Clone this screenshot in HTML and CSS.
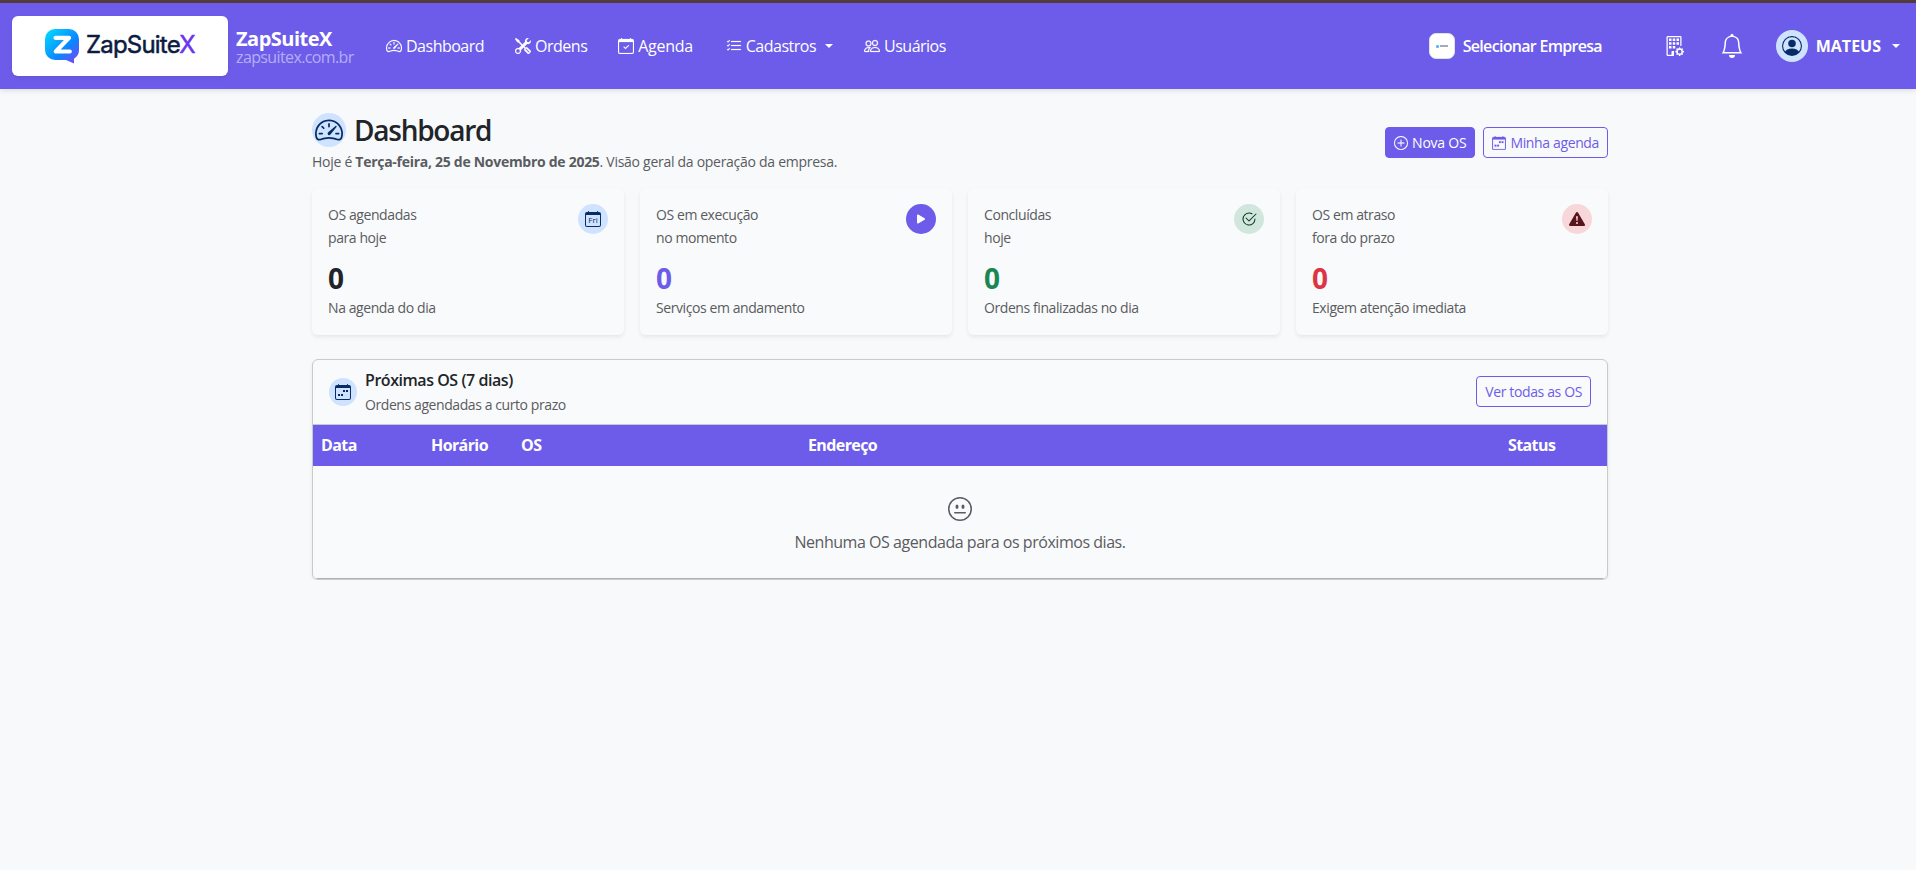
FILE: index.html
```html
<!DOCTYPE html>
<html lang="pt-br">
<head>
    <meta charset="utf-8">
    <title>Dashboard - ZapSuiteX</title>
    <link rel="stylesheet" href="styles.css">
</head>
<body>
    <nav class="navbar">
        <a class="brand">
            <span class="brand-logo">
                <svg width="34" height="35" viewBox="0 0 34 35">
                    <defs>
                        <linearGradient id="logoGrad" x1="0" y1="0" x2="1" y2="1">
                            <stop offset="0" stop-color="#00e0ff"/>
                            <stop offset="0.6" stop-color="#0b84ff"/>
                            <stop offset="1" stop-color="#8a3cf5"/>
                        </linearGradient>
                    </defs>
                    <path fill="url(#logoGrad)" d="M10 0h14a10 10 0 0 1 10 10v11a10 10 0 0 1-5 8.700V34.500L21 31H10A10 10 0 0 1 0 21V10A10 10 0 0 1 10 0z"/>
                    <path d="M10.500 8.800h13.500L10.800 22.500h14" fill="none" stroke="#fff" stroke-width="4.200" stroke-linejoin="round" stroke-linecap="round"/>
                </svg>
                <span class="logo-text">ZapSuite<b>X</b></span>
            </span>
            <span class="brand-info">
                <strong>ZapSuiteX</strong>
                <small>zapsuitex.com.br</small>
            </span>
        </a>
        <ul class="nav-links">
            <li>
                <svg class="icon" viewBox="0 0 16 16"><path d="M8 4a.5.5 0 0 1 .5.5V6a.5.5 0 0 1-1 0V4.500A.5.5 0 0 1 8 4M3.732 5.732a.5.5 0 0 1 .707 0l.915.914a.5.5 0 1 1-.708.708l-.914-.915a.5.5 0 0 1 0-.707M2 10a.5.5 0 0 1 .5-.5h1.586a.5.5 0 0 1 0 1H2.500A.5.5 0 0 1 2 10m9.500 0a.5.5 0 0 1 .5-.5h1.500a.5.5 0 0 1 0 1H12a.5.5 0 0 1-.5-.5m.754-4.246a.39.39 0 0 0-.527-.02L7.547 9.310a.91.91 0 1 0 1.302 1.258l3.434-4.297a.39.39 0 0 0-.029-.518z"/><path fill-rule="evenodd" d="M0 10a8 8 0 1 1 15.547 2.661c-.442 1.253-1.845 1.602-2.932 1.250C11.309 13.488 9.475 13 8 13c-1.474 0-3.310.488-4.615.911-1.087.352-2.490.003-2.932-1.250A8 8 0 0 1 0 10m8-7a7 7 0 0 0-6.603 9.329c.203.575.923.876 1.680.63C4.397 12.533 6.358 12 8 12s3.604.532 4.923.96c.757.245 1.477-.056 1.680-.631A7 7 0 0 0 8 3"/></svg>
                Dashboard
            </li>
            <li>
                <svg class="icon" viewBox="0 0 16 16"><path fill-rule="evenodd" d="M1 0 0 1l2.200 3.081a1 1 0 0 0 .815.419h.07a1 1 0 0 1 .708.293l2.675 2.675-2.617 2.654A3.003 3.003 0 0 0 0 13a3 3 0 1 0 5.878-.851l2.654-2.617.968.968-.305.914a1 1 0 0 0 .242 1.023l3.270 3.270a.997.997 0 0 0 1.414 0l1.586-1.586a.997.997 0 0 0 0-1.414l-3.270-3.270a1 1 0 0 0-1.023-.242L10.500 9.500l-.96-.96 2.680-2.643A3.005 3.005 0 0 0 16 3q0-.405-.102-.777l-2.140 2.141L12 4l-.364-1.757L13.777.102a3 3 0 0 0-3.675 3.680L7.462 6.460 4.793 3.793a1 1 0 0 1-.293-.707v-.071a1 1 0 0 0-.419-.814zm9.646 10.646a.5.5 0 0 1 .708 0l2.914 2.915a.5.5 0 0 1-.707.707l-2.915-2.914a.5.5 0 0 1 0-.708M3 11l.471.242.529.026.287.445.445.287.026.529L5 13l-.242.471-.026.529-.445.287-.287.445-.529.026L3 15l-.471-.242L2 14.732l-.287-.445L1.268 14l-.026-.529L1 13l.242-.471.026-.529.445-.287.287-.445.529-.026z"/></svg>
                Ordens
            </li>
            <li class="nav-agenda">
                <svg class="icon" viewBox="0 0 16 16"><path d="M10.854 7.146a.5.5 0 0 1 0 .708l-3 3a.5.5 0 0 1-.708 0l-1.500-1.500a.5.5 0 1 1 .708-.708L7.500 9.793l2.646-2.647a.5.5 0 0 1 .708 0"/><path d="M3.500 0a.5.5 0 0 1 .5.5V1h8V.5a.5.5 0 0 1 1 0V1h1a2 2 0 0 1 2 2v11a2 2 0 0 1-2 2H2a2 2 0 0 1-2-2V3a2 2 0 0 1 2-2h1V.5a.5.5 0 0 1 .5-.5M1 4v10a1 1 0 0 0 1 1h12a1 1 0 0 0 1-1V4z"/></svg>
                Agenda
            </li>
            <li>
                <svg class="icon" viewBox="0 0 16 16"><path fill-rule="evenodd" d="M5 11.500a.5.5 0 0 1 .5-.5h9a.5.5 0 0 1 0 1h-9a.5.5 0 0 1-.5-.5m0-4a.5.5 0 0 1 .5-.5h9a.5.5 0 0 1 0 1h-9a.5.5 0 0 1-.5-.5m0-4a.5.5 0 0 1 .5-.5h9a.5.5 0 0 1 0 1h-9a.5.5 0 0 1-.5-.5M3.854 2.146a.5.5 0 0 1 0 .708l-1.500 1.500a.5.5 0 0 1-.708 0l-.5-.5a.5.5 0 1 1 .708-.708L2 3.293l1.146-1.147a.5.5 0 0 1 .708 0m0 4a.5.5 0 0 1 0 .708l-1.500 1.500a.5.5 0 0 1-.708 0l-.5-.5a.5.5 0 1 1 .708-.708L2 7.293l1.146-1.147a.5.5 0 0 1 .708 0m0 4a.5.5 0 0 1 0 .708l-1.500 1.500a.5.5 0 0 1-.708 0l-.5-.5a.5.5 0 0 1 .708-.708l.146.147 1.146-1.147a.5.5 0 0 1 .708 0"/></svg>
                Cadastros
                <span class="caret"></span>
            </li>
            <li>
                <svg class="icon" viewBox="0 0 16 16"><path d="M15 14s1 0 1-1-1-4-5-4-5 3-5 4 1 1 1 1zm-7.978-1L7 12.996c.001-.264.167-1.030.76-1.720C8.312 10.629 9.282 10 11 10c1.717 0 2.687.63 3.240 1.276.593.69.758 1.457.76 1.720l-.008.002-.014.002zM11 7a2 2 0 1 0 0-4 2 2 0 0 0 0 4m3-2a3 3 0 1 1-6 0 3 3 0 0 1 6 0M6.936 9.280a6 6 0 0 0-1.230-.247A7 7 0 0 0 5 9c-4 0-5 3-5 4q0 1 1 1h4.216A2.240 2.240 0 0 1 5 13c0-1.010.377-2.042 1.090-2.904.243-.294.526-.569.846-.816M4.920 10A5.500 5.500 0 0 0 4 13H1c0-.26.164-1.030.76-1.724.545-.636 1.492-1.256 3.160-1.275ZM1.500 5.500a3 3 0 1 1 6 0 3 3 0 0 1-6 0m3-2a2 2 0 1 0 0 4 2 2 0 0 0 0-4"/></svg>
                Usuários
            </li>
        </ul>
        <div class="nav-right">
            <a class="company">
                <span class="company-img"><i></i><u></u></span>
                Selecionar Empresa
            </a>
            <svg class="nav-icon building" viewBox="0 0 16 16"><path d="M2 1a1 1 0 0 1 1-1h10a1 1 0 0 1 1 1v6.500a.5.5 0 0 1-1 0V1H3v14h3v-2.500a.5.5 0 0 1 .5-.5H8v4H3a1 1 0 0 1-1-1z"/><path d="M4 2h2v2H4zM7 2h2v2H7zM10 2h2v2h-2zM4 5h2v2H4zM7 5h2v2H7zM10 5h2v2h-2zM4 8h2v2H4zM7 8h2v2H7z"/><path fill-rule="evenodd" d="M11.886 9.460c.18-.613 1.048-.613 1.229 0l.043.148a.64.64 0 0 0 .921.382l.136-.074c.561-.306 1.175.308.87.869l-.075.136a.64.64 0 0 0 .382.92l.149.045c.612.18.612 1.048 0 1.229l-.15.043a.64.64 0 0 0-.38.921l.074.136c.305.561-.309 1.175-.87.87l-.136-.075a.64.64 0 0 0-.92.382l-.045.149c-.18.612-1.048.612-1.229 0l-.043-.15a.64.64 0 0 0-.921-.38l-.136.074c-.561.305-1.175-.309-.87-.87l.075-.136a.64.64 0 0 0-.382-.92l-.148-.045c-.613-.18-.613-1.048 0-1.229l.148-.043a.64.64 0 0 0 .382-.921l-.074-.136c-.306-.561.308-1.175.869-.87l.136.075a.64.64 0 0 0 .92-.382zM14 12.500a1.500 1.500 0 1 0-3 0 1.500 1.500 0 0 0 3 0"/></svg>
            <svg class="nav-icon bell" viewBox="0 0 16 16"><path d="M8 16a2 2 0 0 0 2-2H6a2 2 0 0 0 2 2M8 1.918l-.797.161A4 4 0 0 0 4 6c0 .628-.134 2.197-.459 3.742-.16.767-.376 1.566-.663 2.258h10.244c-.287-.692-.502-1.490-.663-2.258C12.134 8.197 12 6.628 12 6a4 4 0 0 0-3.203-3.920zM14.220 12c.223.447.481.801.78 1H1c.299-.199.557-.553.78-1C2.680 10.200 3 6.880 3 6c0-2.420 1.720-4.440 4.005-4.901a1 1 0 1 1 1.990 0A5 5 0 0 1 13 6c0 .88.32 4.200 1.220 6"/></svg>
            <a class="user">
                <span class="avatar">
                    <svg width="20" height="20" viewBox="0 0 16 16"><path d="M11 6a3 3 0 1 1-6 0 3 3 0 0 1 6 0"/><path fill-rule="evenodd" d="M0 8a8 8 0 1 1 16 0A8 8 0 0 1 0 8m8-7a7 7 0 0 0-5.468 11.370C3.242 11.226 4.805 10 8 10s4.757 1.225 5.468 2.370A7 7 0 0 0 8 1"/></svg>
                </span>
                MATEUS
                <span class="caret"></span>
            </a>
        </div>
    </nav>

    <main class="container">
        <div class="page-header">
            <div>
                <h1>
                    <span class="title-icon">
                        <svg width="28" height="28" viewBox="0 0 16 16"><path d="M8 4a.5.5 0 0 1 .5.5V6a.5.5 0 0 1-1 0V4.500A.5.5 0 0 1 8 4M3.732 5.732a.5.5 0 0 1 .707 0l.915.914a.5.5 0 1 1-.708.708l-.914-.915a.5.5 0 0 1 0-.707M2 10a.5.5 0 0 1 .5-.5h1.586a.5.5 0 0 1 0 1H2.500A.5.5 0 0 1 2 10m9.500 0a.5.5 0 0 1 .5-.5h1.500a.5.5 0 0 1 0 1H12a.5.5 0 0 1-.5-.5m.754-4.246a.39.39 0 0 0-.527-.02L7.547 9.310a.91.91 0 1 0 1.302 1.258l3.434-4.297a.39.39 0 0 0-.029-.518z"/><path fill-rule="evenodd" d="M0 10a8 8 0 1 1 15.547 2.661c-.442 1.253-1.845 1.602-2.932 1.250C11.309 13.488 9.475 13 8 13c-1.474 0-3.310.488-4.615.911-1.087.352-2.490.003-2.932-1.250A8 8 0 0 1 0 10m8-7a7 7 0 0 0-6.603 9.329c.203.575.923.876 1.680.63C4.397 12.533 6.358 12 8 12s3.604.532 4.923.96c.757.245 1.477-.056 1.680-.631A7 7 0 0 0 8 3"/></svg>
                    </span>
                    Dashboard
                </h1>
                <p class="subtitle">Hoje é <strong>Terça-feira, 25 de Novembro de 2025</strong>. Visão geral da operação da empresa.</p>
            </div>
            <div class="actions">
                <button class="btn btn-primary">
                    <svg class="icon" viewBox="0 0 16 16"><path d="M8 15A7 7 0 1 1 8 1a7 7 0 0 1 0 14m0 1A8 8 0 1 0 8 0a8 8 0 0 0 0 16"/><path d="M8 4a.5.5 0 0 1 .5.5v3h3a.5.5 0 0 1 0 1h-3v3a.5.5 0 0 1-1 0v-3h-3a.5.5 0 0 1 0-1h3v-3A.5.5 0 0 1 8 4"/></svg>
                    Nova OS
                </button>
                <button class="btn btn-outline">
                    <svg class="icon" viewBox="0 0 16 16"><path d="M11 6h2v2h-2zM8 6h2v2H8zM3 10h2v2H3zM6 10h2v2H6z"/><path d="M3.500 0a.5.5 0 0 1 .5.5V1h8V.5a.5.5 0 0 1 1 0V1h1a2 2 0 0 1 2 2v11a2 2 0 0 1-2 2H2a2 2 0 0 1-2-2V3a2 2 0 0 1 2-2h1V.5a.5.5 0 0 1 .5-.5M1 4v10a1 1 0 0 0 1 1h12a1 1 0 0 0 1-1V4z"/></svg>
                    Minha agenda
                </button>
            </div>
        </div>

        <div class="cards">
            <div class="card">
                <div class="card-top">
                    <p>OS agendadas<br>para hoje</p>
                    <span class="badge badge-blue">
                        <svg width="16" height="16" viewBox="0 0 16 16"><path d="M3.500 0a.5.5 0 0 1 .5.5V1h8V.5a.5.5 0 0 1 1 0V1h1a2 2 0 0 1 2 2v11a2 2 0 0 1-2 2H2a2 2 0 0 1-2-2V3a2 2 0 0 1 2-2h1V.5a.5.5 0 0 1 .5-.5M1 4v10a1 1 0 0 0 1 1h12a1 1 0 0 0 1-1V4z"/><text x="8" y="12" text-anchor="middle" class="day">Fri</text></svg>
                    </span>
                </div>
                <div class="number">0</div>
                <p>Na agenda do dia</p>
            </div>
            <div class="card">
                <div class="card-top">
                    <p>OS em execução<br>no momento</p>
                    <span class="badge badge-primary">
                        <svg width="16" height="16" viewBox="0 0 16 16"><path d="m11.596 8.697-6.363 3.692c-.54.313-1.233-.066-1.233-.697V4.308c0-.63.692-1.010 1.233-.696l6.363 3.692a.802.802 0 0 1 0 1.393"/></svg>
                    </span>
                </div>
                <div class="number text-primary">0</div>
                <p>Serviços em andamento</p>
            </div>
            <div class="card">
                <div class="card-top">
                    <p>Concluídas<br>hoje</p>
                    <span class="badge badge-green">
                        <svg width="16" height="16" viewBox="0 0 16 16"><path d="M2.500 8a5.500 5.500 0 0 1 8.250-4.764.5.5 0 0 0 .5-.866A6.500 6.500 0 1 0 14.500 8a.5.5 0 0 0-1 0 5.500 5.500 0 1 1-11 0"/><path d="M15.354 3.354a.5.5 0 0 0-.708-.708L8 9.293 5.354 6.646a.5.5 0 1 0-.708.708l3 3a.5.5 0 0 0 .708 0z"/></svg>
                    </span>
                </div>
                <div class="number text-green">0</div>
                <p>Ordens finalizadas no dia</p>
            </div>
            <div class="card">
                <div class="card-top">
                    <p>OS em atraso<br>fora do prazo</p>
                    <span class="badge badge-red">
                        <svg width="16" height="16" viewBox="0 0 16 16"><path d="M8.982 1.566a1.130 1.130 0 0 0-1.960 0L.165 13.233c-.457.778.091 1.767.98 1.767h13.713c.889 0 1.438-.99.98-1.767zM8 5c.535 0 .954.462.9.995l-.35 3.507a.552.552 0 0 1-1.100 0L7.100 5.995A.905.905 0 0 1 8 5m.002 6a1 1 0 1 1 0 2 1 1 0 0 1 0-2"/></svg>
                    </span>
                </div>
                <div class="number text-red">0</div>
                <p>Exigem atenção imediata</p>
            </div>
        </div>

        <section class="panel">
            <div class="panel-header">
                <span class="panel-icon">
                    <svg width="16" height="16" viewBox="0 0 16 16"><path d="M11 6h2v2h-2zM8 6h2v2H8zM3 10h2v2H3zM6 10h2v2H6z"/><path d="M3.500 0a.5.5 0 0 1 .5.5V1h8V.5a.5.5 0 0 1 1 0V1h1a2 2 0 0 1 2 2v11a2 2 0 0 1-2 2H2a2 2 0 0 1-2-2V3a2 2 0 0 1 2-2h1V.5a.5.5 0 0 1 .5-.5M1 4v10a1 1 0 0 0 1 1h12a1 1 0 0 0 1-1V4z"/></svg>
                </span>
                <div class="panel-title">
                    <h2>Próximas OS (7 dias)</h2>
                    <p>Ordens agendadas a curto prazo</p>
                </div>
                <button class="btn btn-outline">Ver todas as OS</button>
            </div>
            <table>
                <thead>
                    <tr>
                        <th class="col-data">Data</th>
                        <th class="col-hora">Horário</th>
                        <th class="col-os">OS</th>
                        <th>Endereço</th>
                        <th class="col-status">Status</th>
                    </tr>
                </thead>
                <tbody>
                    <tr>
                        <td colspan="5">
                            <div class="empty">
                                <svg width="24" height="24" viewBox="0 0 16 16"><path d="M8 15A7 7 0 1 1 8 1a7 7 0 0 1 0 14m0 1A8 8 0 1 0 8 0a8 8 0 0 0 0 16"/><path d="M4 10.500a.5.5 0 0 0 .5.5h7a.5.5 0 0 0 0-1h-7a.5.5 0 0 0-.5.5m3-4C7 5.672 6.552 5 6 5s-1 .672-1 1.500S5.448 8 6 8s1-.672 1-1.500m4 0c0-.828-.448-1.500-1-1.500s-1 .672-1 1.500S9.448 8 10 8s1-.672 1-1.500"/></svg>
                                <span>Nenhuma OS agendada para os próximos dias.</span>
                            </div>
                        </td>
                    </tr>
                </tbody>
            </table>
        </section>
    </main>
</body>
</html>
```
FILE: styles.css
```css
body {
    margin: 0;
    background: #f8f9fb;
    color: #212529;
    font-family: "Open Sans", "Noto Sans", sans-serif;
    font-size: 16px;
    line-height: 24px;
    letter-spacing: -0.026em;
    overflow-x: hidden;
}
h1, h2, p, ul {
    margin: 0;
    padding: 0;
}
svg {
    fill: currentColor;
    flex-shrink: 0;
}
.icon {
    width: 1em;
    height: 1em;
    stroke: currentColor;
    stroke-width: 0.2px;
}

/* navbar */
.navbar {
    display: flex;
    align-items: center;
    height: 86px;
    padding: 0 16px 0 12px;
    border-top: 3px solid #533b3b;
    background: #6c5ce9;
    color: #fff;
    box-shadow: 0 2px 5px rgba(0, 0, 0, 0.1);
}
.brand {
    display: flex;
    align-items: center;
    gap: 8px;
    width: 374px;
}
.brand-logo {
    display: flex;
    align-items: center;
    gap: 7px;
    box-sizing: border-box;
    width: 216px;
    height: 60px;
    padding-left: 33px;
    border-radius: 6px;
    background: #fff;
    box-shadow: 0 2px 4px rgba(0, 0, 0, 0.08);
}
.logo-text {
    color: #0b1b3f;
    font-family: Inter, sans-serif;
    font-size: 24px;
    letter-spacing: -0.8px;
    padding-bottom: 3px;
    -webkit-text-stroke: 0.5px;
}
.logo-text b {
    color: #6a35f0;
    font-weight: 400;
}
.brand-info {
    display: flex;
    flex-direction: column;
    padding-top: 2px;
}
.brand-info strong {
    font-size: 20px;
    line-height: 20px;
    letter-spacing: -0.5px;
}
.brand-info small {
    font-size: 16px;
    line-height: 17px;
    letter-spacing: -0.62px;
    color: rgba(255, 255, 255, 0.5);
}
.nav-links {
    display: flex;
    gap: 31px;
    list-style: none;
    letter-spacing: -0.5px;
}
.nav-links li {
    display: flex;
    align-items: center;
    gap: 4px;
}
.nav-links .nav-agenda {
    margin-right: 2px;
    letter-spacing: -0.3px;
}
.caret {
    border-top: 4.5px solid;
    border-left: 4px solid transparent;
    border-right: 4px solid transparent;
}
.nav-links .caret {
    margin-left: 5px;
}
.nav-right {
    display: flex;
    align-items: center;
    margin-left: auto;
}
.company {
    display: flex;
    align-items: center;
    gap: 8px;
    width: 235px;
    font-weight: 650;
    letter-spacing: -0.7px;
}
.company-img {
    display: flex;
    align-items: center;
    justify-content: center;
    gap: 1px;
    box-sizing: border-box;
    width: 26px;
    height: 26px;
    border: 1px solid #dee2e6;
    border-radius: 7px;
    background: #fff;
}
.company-img i {
    width: 3px;
    height: 3px;
    border-radius: 1px;
    background: #5cb8f5;
}
.company-img u {
    width: 8px;
    height: 2px;
    background: #a5a9bb;
}
.building {
    width: 20px;
    height: 20px;
    margin-right: 36px;
}
.bell {
    width: 24px;
    height: 24px;
    margin-right: 32px;
}
.user {
    display: flex;
    align-items: center;
    gap: 8px;
    font-weight: 700;
    letter-spacing: 0;
}
.user .caret {
    margin-left: 3px;
}
.avatar {
    display: flex;
    align-items: center;
    justify-content: center;
    width: 32px;
    height: 32px;
    border-radius: 50%;
    background: #cfe2ff;
    color: #052c65;
}

/* page */
.container {
    width: 1296px;
    margin-left: 312px;
    padding-top: 24px;
}
.page-header {
    display: flex;
    justify-content: space-between;
    align-items: center;
    margin-bottom: 16px;
}
h1 {
    display: flex;
    align-items: center;
    gap: 8px;
    font-size: 28px;
    font-weight: 550;
    line-height: 34px;
    letter-spacing: -1.25px;
}
.title-icon {
    display: flex;
    align-items: center;
    justify-content: center;
    width: 34px;
    height: 34px;
    border-radius: 50%;
    background: #cfe2ff;
    color: #052c65;
}
p {
    color: #595c60;
    font-size: 14px;
    line-height: 23px;
}
.subtitle {
    margin-top: 4px;
    line-height: 21px;
    letter-spacing: -0.28px;
}
.subtitle strong {
    letter-spacing: -0.28px;
}
.actions {
    display: flex;
    gap: 8px;
}
.btn {
    display: flex;
    align-items: center;
    gap: 4px;
    height: 31px;
    padding: 0 8px;
    border: 1px solid #6c5ce9;
    border-radius: 4px;
    font-family: inherit;
    font-size: 14px;
    letter-spacing: -0.026em;
    white-space: nowrap;
}
.btn-primary {
    background: #6c5ce9;
    color: #fff;
    letter-spacing: -0.22px;
}
.btn-outline {
    background: transparent;
    color: #6c5ce9;
}

/* summary cards */
.cards {
    display: grid;
    grid-template-columns: repeat(4, 1fr);
    gap: 16px;
    margin-bottom: 24px;
}
.card {
    box-sizing: border-box;
    height: 147px;
    padding: 16px;
    border-radius: 6px;
    background: #f9fafb;
    box-shadow: 0 2px 4px rgba(0, 0, 0, 0.075);
}
.card-top {
    display: flex;
    justify-content: space-between;
    align-items: flex-start;
    margin-bottom: 12px;
}
.card-top p {
    margin-top: -1px;
}
.badge {
    display: flex;
    align-items: center;
    justify-content: center;
    width: 30px;
    height: 30px;
    border-radius: 50%;
}
.badge-blue {
    background: #cfe2ff;
    color: #052c65;
}
.badge-primary {
    background: #6c5ce9;
    color: #fff;
}
.badge-green {
    background: #d1e7dd;
    color: #0a3622;
}
.badge-red {
    background: #f8d7da;
    color: #58151c;
}
.day {
    font-size: 8px;
    letter-spacing: 0;
}
.number {
    margin-bottom: 1px;
    font-size: 28px;
    font-weight: 700;
    line-height: 34px;
}
.text-primary {
    color: #6c5ce9;
}
.text-green {
    color: #198754;
}
.text-red {
    color: #dc3545;
}

/* upcoming orders */
.panel {
    border: 1px solid #c8cacc;
    border-radius: 6px;
    background: #f9fafb;
    box-shadow: 0 2px 4px rgba(0, 0, 0, 0.075);
    overflow: hidden;
}
.panel-header {
    display: flex;
    align-items: center;
    box-sizing: border-box;
    height: 65px;
    padding: 0 16px;
    border-bottom: 1px solid #c8cacc;
}
.panel-header .btn {
    padding-bottom: 1px;
    margin-bottom: 1px;
}
.panel-icon {
    display: flex;
    align-items: center;
    justify-content: center;
    width: 28px;
    height: 28px;
    margin-right: 8px;
    border-radius: 50%;
    background: #cfe2ff;
    color: #052c65;
}
.panel-title {
    margin-right: auto;
    padding-bottom: 2px;
}
h2 {
    font-size: 16px;
    font-weight: 600;
    line-height: 26px;
    letter-spacing: -0.45px;
}
table {
    width: 100%;
    table-layout: fixed;
    border-collapse: collapse;
}
th {
    height: 39px;
    padding: 0 8px 2px;
    background: #6c5ce9;
    color: #fff;
    text-align: left;
    letter-spacing: -0.6px;
}
.col-data {
    width: 94px;
}
.col-hora {
    width: 74px;
}
.col-os {
    width: 271px;
}
.col-status {
    width: 91px;
}
td {
    padding: 0;
    border-bottom: 1px solid #b0b2b5;
}
.empty {
    display: flex;
    flex-direction: column;
    align-items: center;
    gap: 9px;
    height: 81px;
    padding-top: 31px;
    color: #595c60;
    letter-spacing: -0.46px;
}
```
